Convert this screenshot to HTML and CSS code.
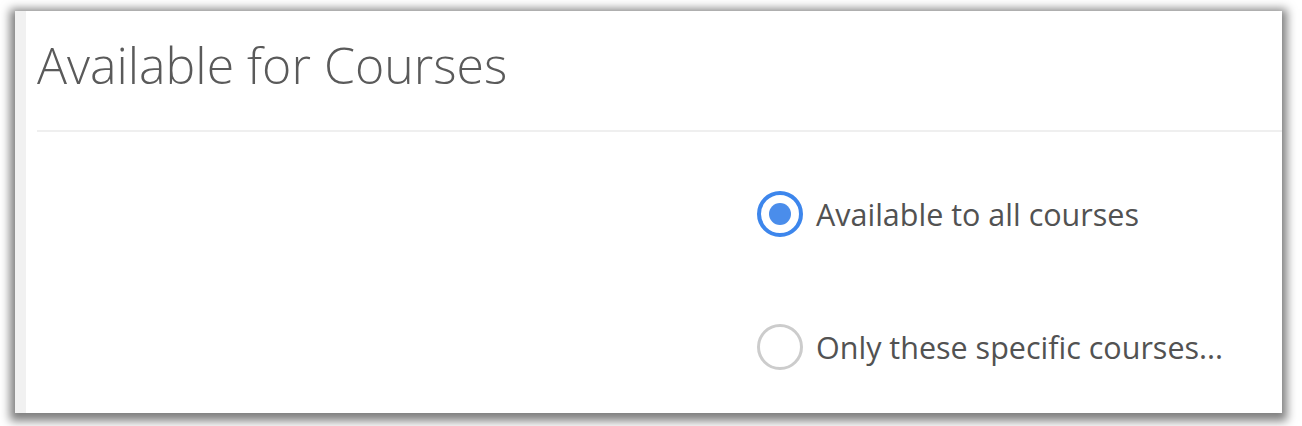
FILE: index.html
```html
<!DOCTYPE html>
<html>
<head>
<meta charset="utf-8">
<link rel="stylesheet" href="styles.css">
</head>
<body>
<div class="frame">
  <div class="panel">
    <div class="header">
      <h1 class="title">Available for Courses</h1>
    </div>
    <div class="divider"></div>
    <div class="options">
      <label class="option">
        <span class="radio radio-on"><span class="dot"></span></span>
        <span class="label">Available to all courses</span>
      </label>
      <label class="option">
        <span class="radio"></span>
        <span class="label">Only these specific courses...</span>
      </label>
    </div>
  </div>
</div>
</body>
</html>
```
FILE: styles.css
```css
html, body {
  margin: 0;
  padding: 0;
  background: #ffffff;
}
body {
  width: 1302px;
  height: 426px;
  overflow: hidden;
  font-family: "Open Sans", "Noto Sans", sans-serif;
}
.frame {
  margin: 11px 0 0 15px;
  width: 1267px;
  height: 402px;
  background: #ffffff;
  box-shadow: 0 3px 9px 5px rgba(0, 0, 0, 0.5);
  border-left: 11px solid #f1f1f1;
  box-sizing: border-box;
}
.panel {
  padding-left: 11px;
}
.header {
  padding-top: 24px;
  height: 119px;
  box-sizing: border-box;
}
.title {
  margin: 0;
  font-size: 50px;
  line-height: 60px;
  font-weight: 300;
  color: #5a5a5a;
  letter-spacing: 0;
}
.divider {
  height: 2px;
  background: #efefef;
}
.options {
  padding: 59px 0 0 720px;
  display: flex;
  flex-direction: column;
  gap: 87px;
}
.option {
  display: flex;
  align-items: center;
  gap: 13px;
  height: 46px;
}
.radio {
  width: 46px;
  height: 46px;
  box-sizing: border-box;
  border-radius: 50%;
  border: 3px solid #cccccc;
  display: flex;
  align-items: center;
  justify-content: center;
  flex: none;
}
.radio-on {
  border: 4px solid #3d86ec;
}
.dot {
  width: 22px;
  height: 22px;
  border-radius: 50%;
  background: #4a8deb;
}
.label {
  font-size: 30.5px;
  color: #525252;
  line-height: 40px;
}
```
